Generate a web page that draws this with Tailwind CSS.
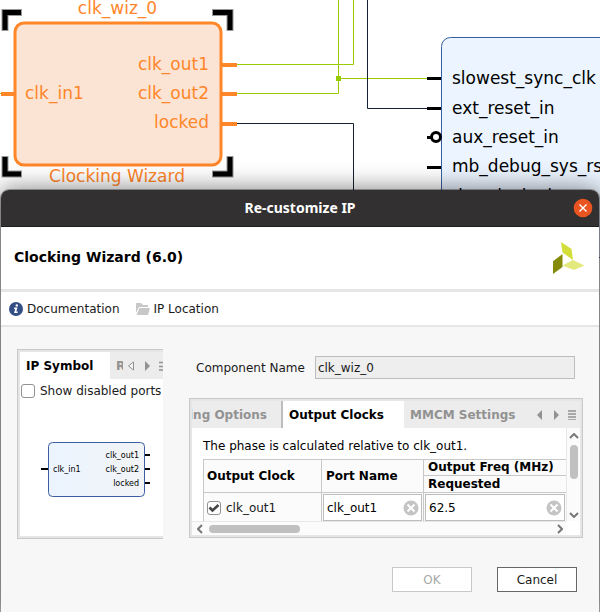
<!DOCTYPE html>
<html lang="en">
<head>
<meta charset="utf-8">
<title>Re-customize IP</title>
<script src="https://cdn.jsdelivr.net/npm/@tailwindcss/browser@4"></script>
</head>
<body class="relative min-h-screen overflow-hidden bg-white font-['DejaVu_Sans',sans-serif] text-xs text-[#1a1a1a]">

<!-- Block design canvas -->
<svg class="absolute left-0 top-0 h-full w-full font-['DejaVu_Sans',sans-serif]" font-size="17" role="img" aria-label="Block design">
  <g fill="none" stroke="#99cc00">
    <path d="M0 93.5H4M236 64.5H353.500V0M236 93.500H338.500V0M338.500 78.500H427"/>
  </g>
  <rect x="336" y="76" width="5" height="5" fill="#99cc00"/>
  <path d="M367.500 0V108.500H427M236 123.500H353.500V200" fill="none" stroke="#142033"/>
  <rect x="15" y="23" width="206" height="142" rx="9" fill="#fce4d4" stroke="#ff8629" stroke-width="3"/>
  <path d="M1 94H14M222 65H237M222 94H237M222 124H237" stroke="#ff8629" stroke-width="4"/>
  <g fill="none" stroke="#000">
    <path d="M5 31V12.500H22M212 12.500H230V31M5 156V174H22M212 174H230V156" stroke-width="7" stroke-opacity="0.4"/>
    <path d="M5 30V12.500H21M213 12.500H230V30M5 157V174H21M213 174H230V157" stroke-width="5"/>
  </g>
  <g fill="#ff8629">
    <text x="117.500" y="14" text-anchor="middle">clk_wiz_0</text>
    <text x="117" y="182" text-anchor="middle">Clocking Wizard</text>
    <text x="25" y="99">clk_in1</text>
    <text x="209" y="70" text-anchor="end">clk_out1</text>
    <text x="209" y="99" text-anchor="end">clk_out2</text>
    <text x="209" y="128" text-anchor="end">locked</text>
  </g>
  <rect x="441.500" y="37.500" width="220" height="220" rx="9" fill="#ebf4ff" stroke="#3a5fa0"/>
  <path d="M427 78.500H441M427 108.500H441M427 137.500H431M427 167.500H441" stroke="#000" stroke-width="3"/>
  <circle cx="436" cy="137" r="4.500" fill="#fff" stroke="#000" stroke-width="3"/>
  <g fill="#000">
    <text x="452" y="84">slowest_sync_clk</text>
    <text x="452" y="114">ext_reset_in</text>
    <text x="452" y="143">aux_reset_in</text>
    <text x="452" y="172">mb_debug_sys_rst</text>
    <text x="452" y="202">dcm_locked</text>
  </g>
</svg>

<main class="relative px-px pb-px pt-[190px]">
<section role="dialog" aria-labelledby="title" class="rounded-t-lg bg-[#f7f7f7] shadow-[0_0_24px_1px_rgba(0,0,0,0.5),0_0_0_1px_rgba(0,0,0,0.3)]">
  <header class="grid h-[37px] grid-cols-[1fr_auto_1fr] items-center rounded-t-lg border-b border-[#1f1e1e] bg-[#323030] px-1.5">
    <h1 id="title" class="col-start-2 font-['Noto_Sans',sans-serif] text-sm font-bold text-white">Re-customize IP</h1>
    <button type="button" aria-label="Close" class="justify-self-end">
      <svg width="20" height="20" viewBox="0 0 20 20"><circle cx="10" cy="10" r="9.300" fill="#e95420"/><path d="M6.500 6.500l7 7M13.500 6.500l-7 7" stroke="#fff" stroke-width="1.400"/></svg>
    </button>
  </header>

  <div class="flex h-[65px] items-center justify-between border-b-[3px] border-[#e6e6e6] bg-white pl-[13px] pr-[14px]">
    <h2 class="pb-0.5 text-sm font-bold text-black">Clocking Wizard (6.0)</h2>
    <svg width="32" height="32" viewBox="0 0 32 32" aria-hidden="true"><path d="M8 0L18.500 7L20 18L9.500 10.500Z" fill="#d3df38"/><path d="M9.500 12V25L0 32V19.300Z" fill="#858a0b"/><path d="M9.500 23.500L20 18L31.500 23.500L21 28Z" fill="#e3e97d"/></svg>
  </div>

  <nav class="flex h-[35px] items-center gap-4 border-b-2 border-[#e6e6e6] bg-white px-2">
    <a href="#" class="flex items-center gap-1">
      <svg width="14" height="14" viewBox="0 0 14 14" aria-hidden="true"><circle cx="7" cy="7" r="7" fill="#344f86"/><circle cx="7.800" cy="3.400" r="1.200" fill="#fff"/><path d="M5.300 5.500H8.500L7.300 9.500H8.800L8.600 11H5.100L6.200 7H5Z" fill="#fff"/></svg>
      Documentation
    </a>
    <a href="#" class="flex items-center gap-1">
      <svg width="14" height="12" viewBox="0 0 14 12" aria-hidden="true"><path d="M0 0H5L7 2H12V4H3L0 10Z" fill="#c8c8c8"/><path d="M3.500 5H14L12 12H0.500Z" fill="#c8c8c8"/></svg>
      IP Location
    </a>
  </nav>

  <div class="flex gap-[26px] px-4 pt-[22px]">
    <!-- Symbol preview -->
    <section class="w-[146px] border-y border-l border-[#c8c8c8]">
      <div class="overflow-hidden border-y-2 border-l-2 border-[#e6e6e6] bg-white">
        <div class="flex h-[27px] bg-[#ececec]">
          <button type="button" class="w-[90px] shrink-0 whitespace-nowrap bg-white pl-1.5 text-left font-bold text-black">IP Symbol</button>
          <button type="button" class="ml-1.5 w-[7px] shrink-0 overflow-hidden text-left font-bold text-[#929292]">Resource</button>
          <div class="ml-1 flex shrink-0 items-center">
            <svg width="40" height="10" viewBox="0 0 40 10" aria-hidden="true"><path d="M6.500 1V9L1.500 5Z" fill="#f7f7f7" stroke="#929292"/><path d="M18 0V10L23 5Z" fill="#929292"/><path d="M32 1.500H40M32 5.500H40M32 9H40" stroke="#929292" stroke-width="1.500"/></svg>
          </div>
        </div>
        <label class="flex h-6 items-center gap-[5px] whitespace-nowrap pl-px">
          <input type="checkbox" class="size-[14px] shrink-0 appearance-none rounded-[3px] border border-[#929292] bg-white">
          Show disabled ports
        </label>
        <svg class="mt-[35px] h-[98px] w-full font-['DejaVu_Sans',sans-serif]" font-size="8" fill="#000" role="img" aria-label="IP symbol">
          <defs><linearGradient id="face"><stop stop-color="#ebf4ff"/><stop offset="1" stop-color="#f2f4f6"/></linearGradient></defs>
          <rect x="28.500" y="4.500" width="96" height="54" rx="4" fill="url(#face)" stroke="#3a5fa0"/>
          <path d="M21 31H28M125 17H130M125 31H130M125 45H130" stroke="#000" stroke-width="2"/>
          <text x="33" y="34">clk_in1</text>
          <text x="119" y="20" text-anchor="end">clk_out1</text>
          <text x="119" y="34" text-anchor="end">clk_out2</text>
          <text x="119" y="48" text-anchor="end">locked</text>
        </svg>
      </div>
    </section>

    <!-- Component settings -->
    <section class="flex min-w-0 flex-1 flex-col">
      <div class="flex items-center gap-2.5 pl-[7px] pr-2 pt-[7px]">
        <label for="component" class="shrink-0 whitespace-nowrap">Component Name</label>
        <input id="component" value="clk_wiz_0" readonly class="h-[23px] min-w-0 flex-1 border border-[#bdbdbd] bg-[#eeeeee] px-0.5 outline-none">
      </div>
      <div class="mt-[19px] border border-[#c8c8c8]">
        <div class="border-2 border-[#e6e6e6] bg-white">
          <div class="flex h-[27px] overflow-hidden bg-[#ececec] font-bold">
            <button type="button" class="flex w-[89px] shrink-0 items-center justify-end overflow-hidden whitespace-nowrap pr-3.5 text-[#929292]">Clocking Options</button>
            <button type="button" class="w-[123px] shrink-0 whitespace-nowrap border-l-2 border-[#bdbdbd] bg-white px-1.5 text-left text-black">Output Clocks</button>
            <button type="button" class="ml-1.5 shrink-0 whitespace-nowrap text-[#929292]">MMCM Settings</button>
            <div class="ml-auto flex shrink-0 items-center pr-[3px]">
              <svg width="41" height="10" viewBox="0 0 41 10" aria-hidden="true" fill="#929292"><path d="M6 0V10L1 5ZM18 0V10L23 5Z"/><path d="M32 1H40M32 4H40M32 7H40M32 10H40" stroke="#929292" stroke-width="1.500"/></svg>
            </div>
          </div>
          <div class="grid grid-cols-[1fr_14px]">
            <div class="h-[93px] overflow-hidden pl-[11px] text-black">
              <p class="flex h-[31px] items-center whitespace-nowrap pt-1">The phase is calculated relative to clk_out1.</p>
              <table class="w-[372px] table-fixed border-collapse bg-[#fbfbfb] text-left">
                <colgroup><col class="w-[118px]"><col class="w-[102px]"><col></colgroup>
                <thead>
                  <tr class="h-4">
                    <th rowspan="2" class="border border-[#c8c8c8] px-[3px] py-0">Output Clock</th>
                    <th rowspan="2" class="border border-[#c8c8c8] px-1 py-0">Port Name</th>
                    <th class="whitespace-nowrap border border-[#c8c8c8] px-1 py-0 leading-[15px]">Output Freq (MHz)</th>
                  </tr>
                  <tr class="h-4"><th class="border border-[#c8c8c8] px-1 py-0 leading-4">Requested</th></tr>
                </thead>
                <tbody>
                  <tr>
                    <td class="border border-[#c8c8c8] p-0 pl-[3px]">
                      <label class="flex items-center gap-[5px] text-[#1a1a1a]">
                        <span class="grid">
                          <input type="checkbox" checked class="col-start-1 row-start-1 size-[14px] appearance-none rounded-[3px] border border-[#929292] bg-white">
                          <svg class="pointer-events-none col-start-1 row-start-1" width="14" height="14" viewBox="0 0 14 14" aria-hidden="true"><path d="M2.500 6.500L5.500 9.500L11.500 4" fill="none" stroke="#444" stroke-width="2.600"/></svg>
                        </span>
                        clk_out1
                      </label>
                    </td>
                    <td class="border border-[#c8c8c8] p-px">
                      <div class="flex h-[27px] items-center border border-[#bdbdbd] bg-white pl-[3px] pr-0.5">
                        <input aria-label="Port name" value="clk_out1" class="w-0 min-w-0 flex-1 outline-none">
                        <button type="button" aria-label="Clear port name"><svg width="16" height="16" viewBox="0 0 16 16"><circle cx="8" cy="8" r="7.500" fill="#c4c4c4"/><path d="M4.500 4.500l7 7M11.500 4.500l-7 7" stroke="#fff" stroke-width="2"/></svg></button>
                      </div>
                    </td>
                    <td class="border border-[#c8c8c8] p-px pr-[9px]">
                      <div class="flex h-[27px] items-center border border-[#bdbdbd] bg-white pl-[3px] pr-0.5">
                        <input aria-label="Requested frequency" value="62.5" class="w-0 min-w-0 flex-1 outline-none">
                        <button type="button" aria-label="Clear frequency"><svg width="16" height="16" viewBox="0 0 16 16"><circle cx="8" cy="8" r="7.500" fill="#c4c4c4"/><path d="M4.500 4.500l7 7M11.500 4.500l-7 7" stroke="#fff" stroke-width="2"/></svg></button>
                      </div>
                    </td>
                  </tr>
                </tbody>
              </table>
            </div>
            <div class="flex flex-col items-center border-l border-[#e8e8e8] bg-[#fbfbfb] pb-[3px] pt-[5px]" aria-hidden="true">
              <svg width="10" height="6" viewBox="0 0 10 6"><path d="M1 5L5 1L9 5" fill="none" stroke="#777" stroke-width="2"/></svg>
              <span class="mt-1.5 h-[34px] w-2 rounded-full bg-[#c0c0c0]"></span>
              <svg class="mt-auto" width="10" height="6" viewBox="0 0 10 6"><path d="M1 1L5 5L9 1" fill="none" stroke="#777" stroke-width="2"/></svg>
            </div>
            <div class="flex h-[14px] items-center border-t border-[#e8e8e8] bg-[#fbfbfb] pl-[5px] pr-[3px]" aria-hidden="true">
              <svg width="6" height="10" viewBox="0 0 6 10"><path d="M5 1L1 5L5 9" fill="none" stroke="#777" stroke-width="2"/></svg>
              <span class="ml-1.5 h-2 w-[91px] rounded-full bg-[#c0c0c0]"></span>
              <svg class="ml-auto" width="6" height="10" viewBox="0 0 6 10"><path d="M1 1L5 5L1 9" fill="none" stroke="#777" stroke-width="2"/></svg>
            </div>
          </div>
        </div>
      </div>
    </section>
  </div>

  <footer class="flex justify-end gap-[25px] pb-5 pr-[22px] pt-7">
    <button type="button" disabled class="h-[25px] w-20 border border-[#c8c8c8] bg-white text-[#a9a9a9]">OK</button>
    <button type="button" class="h-[25px] w-20 border border-[#666] bg-white">Cancel</button>
  </footer>
</section>
</main>
</body>
</html>
